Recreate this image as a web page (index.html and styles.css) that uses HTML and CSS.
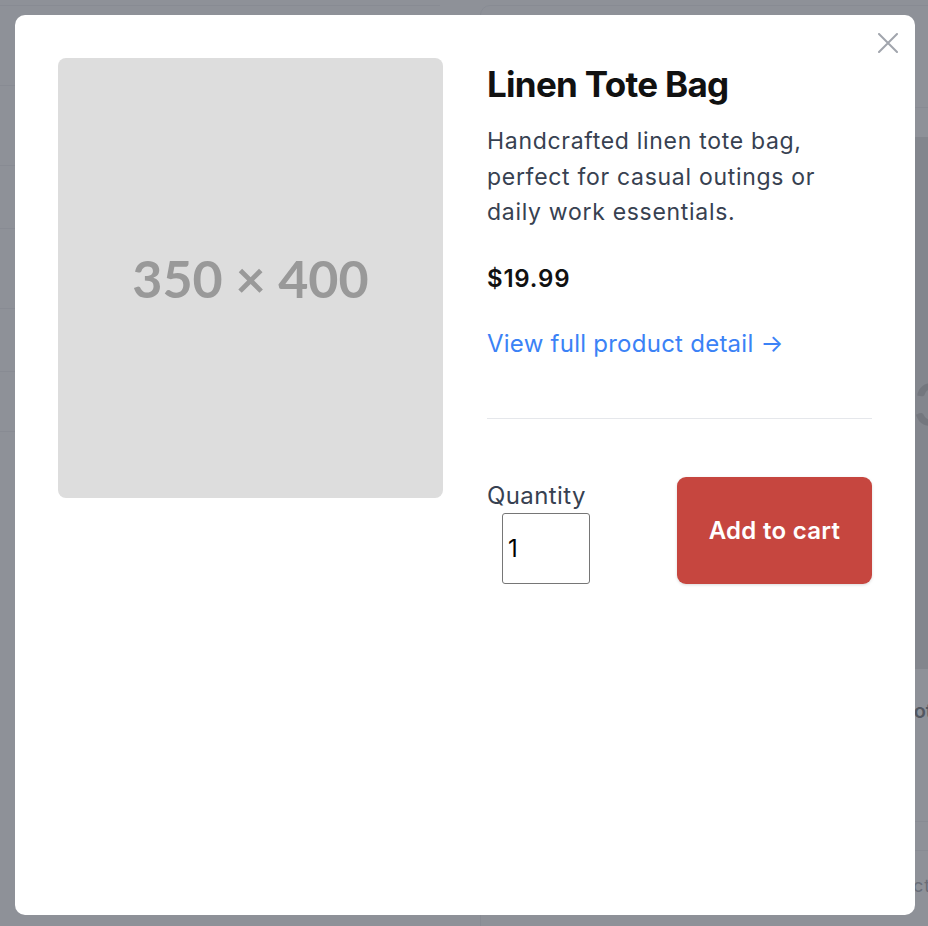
FILE: index.html
```html
<!DOCTYPE html>
<html lang="en">
<head>
  <meta charset="UTF-8">
  <meta name="viewport" content="width=device-width, initial-scale=1.0">
  <title>Linen Tote Bag</title>
  <link rel="stylesheet" href="styles.css">
</head>
<body>
  <!-- page behind the dialog -->
  <div class="page">
    <aside class="filters">
      <div class="filter-row"></div>
      <div class="filter-row"></div>
      <div class="filter-row short"></div>
      <div class="filter-row"></div>
      <div class="filter-row short"></div>
      <div class="filter-row shorter"></div>
    </aside>
    <section class="card">
      <div class="card-head"></div>
      <div class="card-image"><span>350 × 400</span></div>
      <p class="card-name">Tote Bag</p>
      <div class="card-meta"></div>
      <div class="card-meta thin"></div>
      <p class="card-note">ct</p>
    </section>
  </div>

  <!-- quick view dialog -->
  <div class="overlay">
    <div class="modal">
      <button class="close-btn" type="button" aria-label="Close">
        <svg width="20" height="20" viewBox="0 0 20 20" fill="none" stroke="currentColor" stroke-width="2" stroke-linecap="round">
          <path d="M1 1L19 19M19 1L1 19"/>
        </svg>
      </button>
      <div class="placeholder">350 × 400</div>
      <div class="info">
        <h2 class="title">Linen Tote Bag</h2>
        <p class="description">Handcrafted linen tote bag, perfect for casual outings or daily work essentials.</p>
        <p class="price">$19.99</p>
        <a class="detail-link" href="#">View full product detail →</a>
        <div class="actions">
          <div class="quantity">
            <label for="qty">Quantity</label>
            <input id="qty" type="text" value="1">
          </div>
          <button class="add-btn" type="button">Add to cart</button>
        </div>
      </div>
    </div>
  </div>
</body>
</html>
```

FILE: styles.css
```css
body {
  margin: 0;
  background: white;
  font-family: 'Inter', 'Liberation Sans', sans-serif;
  overflow: hidden;
  height: 926px;
}

/* background page */
.page {
  display: flex;
  gap: 40px;
  padding-top: 5px;
}
.filters {
  width: 440px;
  flex-shrink: 0;
  border-top: 1px solid #e5e7eb;
}
.filter-row {
  height: 79px;
  border-bottom: 1px solid #e5e7eb;
}
.filter-row.short {
  height: 62px;
}
.filter-row.shorter {
  height: 59px;
}
.card {
  width: 520px;
  flex-shrink: 0;
  border: 1px solid #e5e7eb;
  border-radius: 10px;
  height: 960px;
}
.card-head {
  height: 101px;
  border-bottom: 1px solid #e5e7eb;
}
.card-image {
  margin-top: 29px;
  height: 532px;
  background: #d1d1d1;
  display: flex;
  align-items: center;
  padding-left: 433px;
  white-space: nowrap;
  font-family: 'Lato', sans-serif;
  font-weight: 700;
  font-size: 60px;
  color: #999;
}
.card-name {
  margin: 30px 0 0;
  padding-left: 421px;
  font-size: 20px;
  line-height: 24px;
  font-weight: 600;
  white-space: nowrap;
  color: #111827;
}
.card-meta {
  margin-top: 98px;
  border-top: 1px solid #e5e7eb;
  height: 28px;
}
.card-meta.thin {
  margin-top: 0;
  height: 0;
}
.card-note {
  margin: 24px 0 0;
  padding-left: 432px;
  font-size: 18px;
  line-height: 22px;
  color: #6b7280;
  letter-spacing: 1px;
}

/* dialog */
.overlay {
  position: fixed;
  top: 0; left: 0; right: 0; bottom: 0;
  background: rgba(104, 108, 118, 0.75);
  padding: 15px;
}
.modal {
  position: relative;
  width: 900px;
  height: 900px;
  box-sizing: border-box;
  padding: 43px;
  background: white;
  border-radius: 10px;
  display: grid;
  grid-template-columns: 385px 385px;
  column-gap: 44px;
  align-items: start;
}
.close-btn {
  position: absolute;
  top: 18px;
  right: 17px;
  padding: 0;
  border: none;
  background: none;
  color: #a1a5ad;
  cursor: pointer;
  line-height: 0;
}
.placeholder {
  height: 440px;
  background: #dddddd;
  border-radius: 8px;
  display: flex;
  align-items: center;
  justify-content: center;
  font-family: 'Lato', 'Liberation Sans', sans-serif;
  font-weight: 700;
  font-size: 52px;
  color: #999999;
}
.title {
  margin: 0;
  font-size: 35px;
  line-height: 52px;
  font-weight: 700;
  letter-spacing: -0.02em;
  color: #111;
}
.description {
  margin: 14px 0 0;
  font-size: 23px;
  line-height: 35.5px;
  letter-spacing: 0.7px;
  color: #374151;
}
.price {
  margin: 32px 0 0;
  font-size: 24px;
  line-height: 32px;
  font-weight: 600;
  letter-spacing: 0.8px;
  color: #111;
}
.detail-link {
  display: block;
  margin-top: 33px;
  font-size: 24px;
  line-height: 32px;
  letter-spacing: 0.25px;
  color: #3b82f6;
  text-decoration: none;
  padding-bottom: 58px;
  border-bottom: 1px solid #e5e7eb;
}
.actions {
  margin-top: 58px;
  display: flex;
  justify-content: space-between;
  align-items: flex-end;
}
.quantity label {
  display: block;
  font-size: 24px;
  line-height: 30px;
  letter-spacing: 0.4px;
  color: #374151;
}
.quantity input {
  display: block;
  margin: 2px 0 0 15px;
  width: 88px;
  height: 71px;
  box-sizing: border-box;
  padding: 0 5px;
  border: 1px solid #767676;
  border-radius: 3px;
  font-family: 'Inter', sans-serif;
  font-size: 24px;
  color: black;
}
.add-btn {
  width: 195px;
  height: 107px;
  border: none;
  border-radius: 9px;
  background-color: #c6463f;
  color: white;
  font-family: 'Inter', sans-serif;
  font-size: 24px;
  font-weight: 600;
  letter-spacing: 0.3px;
  box-shadow: 0 1px 3px rgba(0, 0, 0, 0.15);
  cursor: pointer;
}
```
